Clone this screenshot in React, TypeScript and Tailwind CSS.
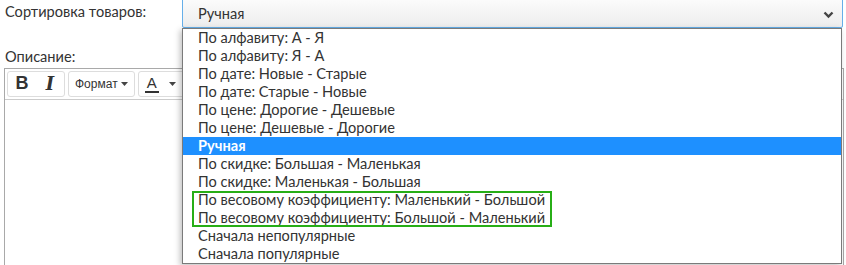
import React from "react";

const options = [
  "По алфавиту: А - Я",
  "По алфавиту: Я - А",
  "По дате: Новые - Старые",
  "По дате: Старые - Новые",
  "По цене: Дорогие - Дешевые",
  "По цене: Дешевые - Дорогие",
  "Ручная",
  "По скидке: Большая - Маленькая",
  "По скидке: Маленькая - Большая",
  "По весовому коэффициенту: Маленький - Большой",
  "По весовому коэффициенту: Большой - Маленький",
  "Сначала непопулярные",
  "Сначала популярные",
];

export default function App() {
  return (
    <div
      className="relative w-[846px] h-[265px] overflow-hidden bg-white text-[#333]"
      style={{ fontFamily: "Lato, 'Open Sans', sans-serif" }}
    >
      {/* Row 1 */}
      <div className="flex items-center -mt-[8px] h-[36px]">
        <div className="w-[182px] pl-[5px] text-[14.6px] leading-none pt-[4px]">Сортировка товаров:</div>
        <div className="flex-1 mr-[3px] h-[36px] border border-[#66afe9] rounded-[2px] bg-gradient-to-b from-white to-[#ededed] flex items-center justify-between pl-[15px] pr-[8px] pt-[8px]">
          <span className="text-[14.6px]">Ручная</span>
          <svg width="11" height="8" viewBox="0 0 11 8" className="mt-[1px]">
            <path d="M1.5 1.5 L5.5 5.5 L9.5 1.5" stroke="#444" strokeWidth="2.4" fill="none" />
          </svg>
        </div>
      </div>

      {/* Описание */}
      <div className="pl-[5px] mt-[22px] text-[14.6px] leading-none">Описание:</div>

      {/* Editor */}
      <div className="ml-[4px] mr-[2px] mt-[3px] h-[200px] border border-[#a9a9a9]">
        <div className="flex items-center gap-[3px] px-[2px] h-[31px] border-b border-[#ccc]">
          <div className="flex h-[26px] border border-[#ddd] rounded-[3px]">
            <div className="w-[28px] flex items-center justify-center font-bold text-[18px] text-[#333]" style={{ fontFamily: "'Liberation Sans', Arial, sans-serif" }}>B</div>
            <div className="w-[28px] flex items-center justify-center italic font-bold text-[18px] text-[#333]" style={{ fontFamily: "'DejaVu Serif', serif" }}>I</div>
          </div>
          <div className="flex items-center gap-[3px] h-[26px] px-[6px] border border-[#ddd] rounded-[3px] text-[12px]" style={{ fontFamily: "'Liberation Sans', Arial, sans-serif" }}>
            Формат
            <svg width="7" height="4" viewBox="0 0 7 4"><path d="M0 0 L7 0 L3.5 4 Z" fill="#444" /></svg>
          </div>
          <div className="flex items-center gap-[10px] h-[26px] px-[6px] w-[60px] border border-[#ddd] rounded-[3px]">
            <span className="text-[15px] border-b-2 border-[#333] leading-[16px] px-[2px]" style={{ fontFamily: "'Liberation Sans', Arial, sans-serif" }}>A</span>
            <svg width="7" height="4" viewBox="0 0 7 4"><path d="M0 0 L7 0 L3.5 4 Z" fill="#444" /></svg>
          </div>
        </div>
      </div>

      {/* Dropdown */}
      <div className="absolute left-[182px] top-[28px] w-[660px] border border-[#7a7a7a] bg-white shadow-[-2px_2px_6px_rgba(0,0,0,0.25)]">
        {options.map((o, i) => (
          <div
            key={o}
            className={
              "h-[18px] leading-[18px] pl-[15px] text-[14.6px] whitespace-nowrap " +
              (i === 6 ? "bg-[#1e90ff] text-white font-bold" : "text-[#333]")
            }
          >
            {o}
          </div>
        ))}
        <div className="absolute left-[9px] top-[162px] w-[360px] h-[36px] border-2 border-[#27ae16] pointer-events-none" />
      </div>
    </div>
  );
}
